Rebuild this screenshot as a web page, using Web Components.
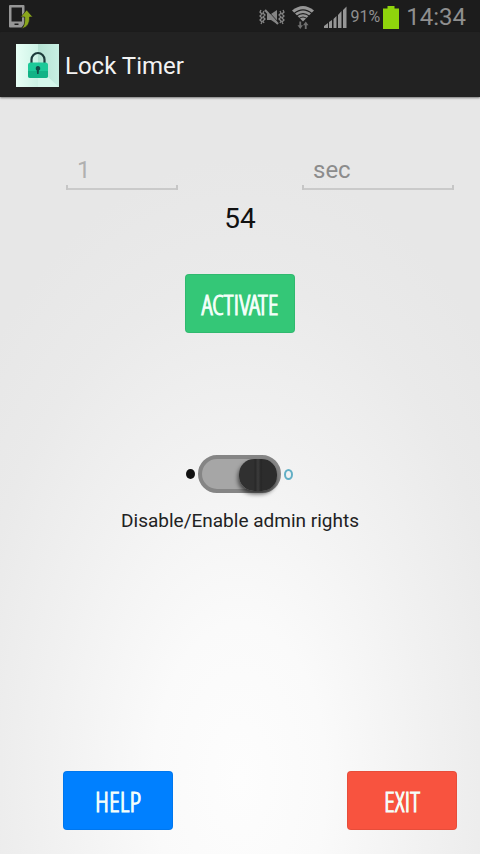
<!DOCTYPE html>
<html lang="en">
<head>
<meta charset="utf-8">
<meta name="viewport" content="width=device-width, initial-scale=1">
<title>Lock Timer</title>
<style>
body{margin:0;font-family:Roboto,"Noto Sans",sans-serif;color:#222}
</style>
</head>
<body>
<lock-app></lock-app>
<script>
const define = (name, html, setup) => customElements.define(name, class extends HTMLElement {
  constructor() {
    super();
    this.attachShadow({ mode: 'open' }).innerHTML = html;
  }
  connectedCallback() { if (setup) setup(this, this.shadowRoot); }
});

define('status-bar', `
<style>
:host{display:flex;align-items:center;height:33px;padding:0 14px 0 8px;background:#1c1c1c;color:#8f8f8f}
svg{display:block;flex:none}
.space{flex:1}
.wifi{margin-left:7px}.signal{margin-left:10px}
.pct{font-size:16px;margin:0 3px 0 4px}
.time{font-size:24px;margin-left:7px}
</style>
<svg width="25" height="26" viewBox="0 0 25 26"><path fill="#969696" fill-rule="evenodd" d="M2 1h13.500q1 0 1 1v18l-3 3.500H2q-1 0-1-1V2q0-1 1-1ZM3.500 3.500v14H14v-14ZM6.500 19.500v1.500h4v-1.500Z"/><path fill="#8aa61c" stroke="#1c1c1c" stroke-width=".6" d="M18.700 6l6 7h-3.200c.3 6-2 10.500-8 11.500c3-2.500 3.500-6 3.200-11.500h-4Z"/></svg>
<span class="space"></span>
<svg width="26" height="18" viewBox="0 0 26 18" fill="none" stroke="#858585"><path stroke-width="1.300" d="M2 2l-1 2 2 2-2 2 2 2-2 2 2 2-1 2M5 3L4 5l2 2-2 2 2 2-2 2 1 2M24 2l1 2-2 2 2 2-2 2 2 2-2 2 1 2M21 3l1 2-2 2 2 2-2 2 2 2-1 2"/><path fill="#858585" stroke="none" d="M8 6h4l6-4v14l-6-4H8Z"/><path stroke="#1c1c1c" stroke-width="1" d="M7 1l13 14"/><path stroke-width="2" d="M6 2l13 14"/></svg>
<svg class="wifi" width="22" height="26" viewBox="0 0 24 26"><path fill="#969696" d="M0 6Q12-4 24 6L12 18Z"/><path fill="none" stroke="#1c1c1c" stroke-width="1.200" d="M2 9.500Q12 1 22 9.500M5 12Q12 6.500 19 12M8 14.500Q12 11.500 16 14.500"/><path fill="#707070" d="M8 18h2v4h2l-3 4-3-4h2ZM14 26h2v-4h2l-3-4-3 4h2Z"/></svg>
<svg class="signal" width="23" height="22" viewBox="0 0 23 22" fill="#969696"><path d="M0 22v-2l4-3v5ZM5 22v-6l3-2v8ZM9.500 22v-9l3-3v12ZM14 22V9l3.500-4v17ZM19 22V4l3.500-3.500V22Z"/></svg>
<span class="pct">91%</span>
<svg width="16" height="24" viewBox="0 0 16 24"><path fill="#8fd40c" d="M4.500 1h7v2.500H16V24H0V3.500h4.500Z"/></svg>
<span class="time">14:34</span>`);

define('app-bar', `
<style>
:host{display:flex;align-items:center;gap:6px;height:64px;padding:0 16px;background:#222;color:#f3f3f3;box-shadow:0 1px 2px #777;position:relative}
svg{display:block;flex:none}
h1{margin:0;padding-top:2px;font-size:24px;font-weight:400;line-height:32px}
</style>
<svg width="43" height="43" viewBox="0 0 43 43"><defs><linearGradient id="g"><stop offset="0" stop-color="#e8fff6"/><stop offset=".5" stop-color="#cdf3e6"/><stop offset=".52" stop-color="#b5e2d3"/><stop offset="1" stop-color="#c8efe3"/></linearGradient></defs>
<path fill="url(#g)" d="M0 0h43v43H0Z"/><path fill="#d5f7ec" d="M22 34l9-2 12 11H22Z"/><path fill="none" stroke="#1d3b3b" stroke-width="2.200" d="M15.500 19v-3.500a6.500 6.500 0 0 1 13 0V19"/><rect x="12" y="18.500" width="20" height="15.500" rx="2.500" fill="#1cc998"/><path fill="#12b386" d="M12 27h20v4.500q0 2.500-2.500 2.500h-15q-2.500 0-2.500-2.500Z"/><path fill="#124c48" d="M19.700 24.500a2.300 2.300 0 1 1 3.200 2l-.3 3.500h-1.500l-.3-3.500q-1.100-.5-1.100-2Z"/></svg>
<h1><slot></slot></h1>`);

define('line-field', `
<style>
:host{display:block}
input{display:block;box-sizing:border-box;width:100%;height:36px;padding:0 11px 4px;border:0;outline:0;background:linear-gradient(#c6c6c6,#c6c6c6) left bottom/2px 5px no-repeat,linear-gradient(#c6c6c6,#c6c6c6) right bottom/2px 5px no-repeat,linear-gradient(#cacaca,#cacaca) left bottom/100% 2px no-repeat;font:24px Roboto,"Noto Sans",sans-serif;color:#222}
input::placeholder{color:var(--hint,#8c8c8c);opacity:1}
</style>
<input type="text">`, (el, root) => {
  const input = root.querySelector('input');
  input.placeholder = el.getAttribute('hint');
  input.setAttribute('aria-label', el.getAttribute('label'));
});

define('flat-button', `
<style>
:host{display:block}
button{display:block;width:110px;height:59px;padding:0;border:1px solid #0001;border-radius:4px;background:var(--fill);color:#f4fffa;-webkit-text-stroke:1px #f4fffa;font:300 28px "Open Sans Condensed Light","Open Sans Condensed","Liberation Sans Narrow",sans-serif}
</style>
<button type="button"><slot></slot></button>`);

define('admin-switch', `
<style>
:host{display:block}
label{display:flex;flex-direction:column;align-items:center;gap:14px;font-size:19px;line-height:28px}
.row{display:flex;align-items:center;gap:3px}
.off{width:9px;height:10px;border-radius:50%;background:#111}
.on{box-sizing:border-box;width:9px;height:11px;border:2px solid #62afc5;border-radius:50%}
input{appearance:none;box-sizing:border-box;display:flex;justify-content:flex-start;width:83px;height:38px;margin:0;padding:0;border:4px solid #858585;border-radius:19px;background:#a6a6a6}
input:checked{justify-content:flex-end}
input::before{content:"";width:38px;height:32px;border-radius:15px;background:linear-gradient(90deg,#303030 40%,#262626 42%,#3c3c3c 50%,#262626 58%,#2c2c2c 62%);box-shadow:-1px 3px 4px #0009}
</style>
<label><span class="row"><span class="off"></span><input type="checkbox" checked><span class="on"></span></span><span><slot></slot></span></label>`);

define('lock-app', `
<style>
:host{display:flex;flex-direction:column;min-height:100vh;background:#e7e7e7}
main{flex:1;display:flex;flex-direction:column;align-items:center;background:radial-gradient(ellipse 72% 82% at 50% 90%,#fdfdfd 0%,#fafafa 25%,#f1f1f1 55%,#eaeaea 80%,#e7e7e7 100%)}
.fields{align-self:stretch;display:flex;justify-content:space-between;padding:57px 26px 0 66px}
.amount{width:112px;--hint:#b0b0b0}
.unit{width:152px}
output{margin-top:12px;font-size:28px;line-height:34px;color:#111}
.go{margin-top:38px;--fill:#34c777}
admin-switch{margin-top:122px}
nav{align-self:stretch;display:flex;justify-content:space-between;margin-top:auto;padding:0 23px 24px 63px}
.help{--fill:#0080ff}
.exit{--fill:#f8533f}
</style>
<status-bar></status-bar>
<app-bar>Lock Timer</app-bar>
<main>
<div class="fields"><line-field class="amount" hint="1" label="Amount"></line-field><line-field class="unit" hint="sec" label="Unit"></line-field></div>
<output>54</output>
<flat-button class="go">ACTIVATE</flat-button>
<admin-switch>Disable/Enable admin rights</admin-switch>
<nav><flat-button class="help">HELP</flat-button><flat-button class="exit">EXIT</flat-button></nav>
</main>`);
</script>
</body>
</html>
